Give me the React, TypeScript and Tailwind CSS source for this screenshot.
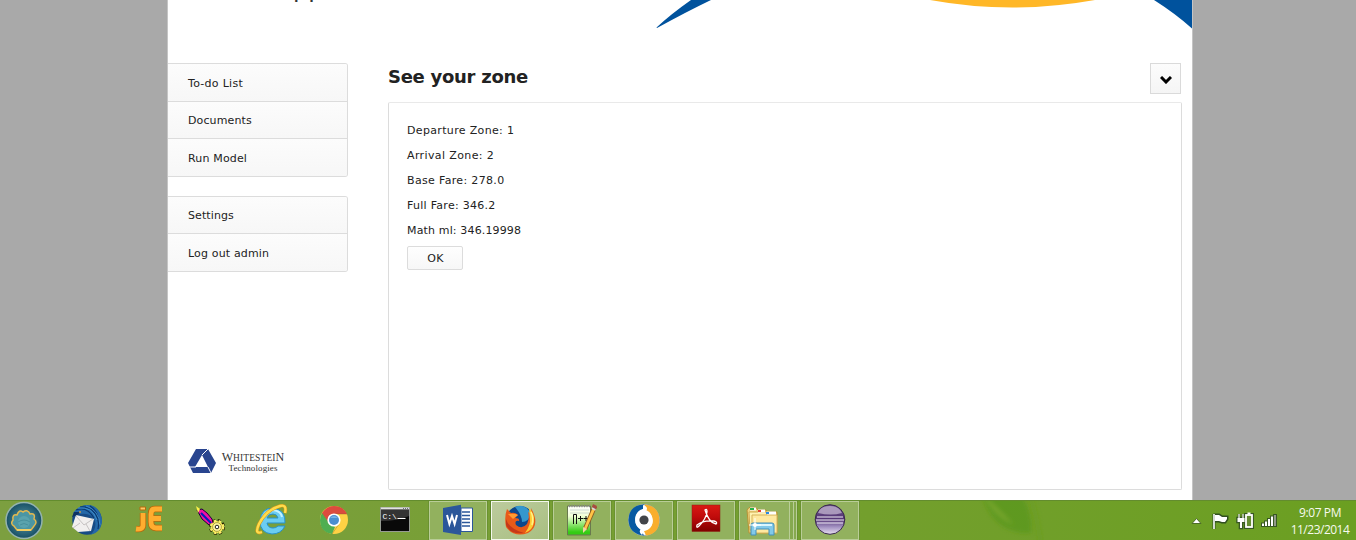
import type { ReactNode } from "react";

function Icon({ children }: { children: ReactNode }) {
  return (
    <svg viewBox="0 0 60 40" className="-mt-[1px] h-[40px] w-[60px] shrink-0">
      {children}
    </svg>
  );
}

function Slot({ children, open, active }: { children: ReactNode; open?: boolean; active?: boolean }) {
  const look = active
    ? "border-[#f4f8ec] bg-gradient-to-br from-[#bccb9e] to-[#a8bf80] outline outline-[#5c852a]"
    : open
      ? "border-[#b9cd97] bg-[#92b15e] outline outline-[#6a9230]"
      : "border-transparent";
  return (
    <div className={`mt-[1px] mr-[3px] ml-[1px] flex h-[39px] w-[58px] shrink-0 items-center justify-center border ${look}`}>
      {children}
    </div>
  );
}

type Label = { text: string; spacing: string; height?: string };

function Menu({ items }: { items: Label[] }) {
  return (
    <nav className="w-[180px] overflow-hidden rounded-r-[3px] border border-l-0 border-[#dcdcdc]">
      {items.map((item, i) => (
        <div
          key={item.text}
          className={`flex items-center bg-gradient-to-b from-[#fcfcfc] to-[#f7f7f7] pl-5 ${i ? "border-t border-[#dcdcdc]" : ""} ${item.height} ${item.spacing}`}
        >
          {item.text}
        </div>
      ))}
    </nav>
  );
}

function Thunderbird() {
  return (
    <Icon>
      <circle cx="31" cy="20" r="14.8" fill="#174b86" />
      <path d="M17 13Q24 4 34 5Q44 7 46 20Q46 32 34 35Q41 29 39 21Q35 12 24 14Z" fill="#2468a9" />
      <path d="M20 10Q31 6 38 18M24 7Q40 5 43 25M34 6Q45 13 42 29" fill="none" stroke="#0b3870" strokeWidth="1.2" />
      <path d="M22 8Q36 6 41 20M30 6Q43 10 44 25" fill="none" stroke="#4495d2" strokeWidth=".8" />
      <path d="M20 15L38 19L35 31L22 32L16 27Z" fill="#f1efee" />
      <path d="M20 16L28 25L37 19M17 28L24 23M34 31L30 24" fill="none" stroke="#bab6b6" strokeWidth=".8" />
      <path d="M16 17L18 12L25 12L21 15Z" fill="#0e3262" />
      <circle cx="24" cy="12" r="1" fill="#c99f4d" />
    </Icon>
  );
}

function JEdit() {
  return (
    <Icon>
      <path d="M25 13V25Q25 30 18 29M44 9H37Q33 9 33 14V22Q33 28 38 28H44M33 18.5H43" fill="none" stroke="#b86a0c" strokeWidth="6.4" />
      <path d="M25 13V25Q25 30 18 29M44 9H37Q33 9 33 14V22Q33 28 38 28H44M33 18.5H43" fill="none" stroke="#ffad2f" strokeWidth="4.8" />
      <path d="M22 7H27.5V10H22Z" fill="#ffc965" stroke="#b86a0c" />
    </Icon>
  );
}

function FeatherGear() {
  return (
    <Icon>
      <path d="M17 10L22 9L27 13L32 19L34 26L29 25L22 19Z" fill="#f010a4" stroke="#16003b" />
      <path d="M16 6L20 9L18 13Z" fill="#fff34a" />
      <path d="M21 13L31 23" stroke="#001dbb" strokeWidth="2" />
      <circle cx="37" cy="27" r="6" fill="#ffef58" stroke="#1d1c00" strokeWidth="4" strokeDasharray="2.7 2" />
      <circle cx="37" cy="27" r="5.8" fill="#ffef58" stroke="#fff06a" strokeWidth="3" strokeDasharray="2.3 2.4" />
      <circle cx="37" cy="27" r="4.4" fill="#fff59a" stroke="#786e20" strokeWidth=".6" />
      <circle cx="37" cy="27" r="1.8" fill="#fff" stroke="#222" />
    </Icon>
  );
}

function Explorer() {
  return (
    <Icon>
      <path fillRule="evenodd" d="M43 23H25Q26 28 31 28Q34 28 36 26H43Q39 34 30 34Q18 33 18 21Q19 8 31 8Q44 10 43 23ZM25 18H36Q35 14 31 14Q26 14 25 18Z" fill="#6bcdf2" stroke="#2791c9" />
      <path d="M21 17Q24 10 31 10Q39 11 40 17" fill="none" stroke="#c5f2fd" strokeWidth="2" />
      <path d="M20 32Q12 35 17 24Q24 10 38 6Q45 4 43 13" fill="none" stroke="#d79b15" strokeWidth="3.5" />
      <path d="M20 32Q12 35 17 24Q24 10 38 6Q45 4 43 13" fill="none" stroke="#ffdc4c" strokeWidth="2.4" />
    </Icon>
  );
}

function Chrome() {
  return (
    <Icon>
      <circle cx="30" cy="20" r="14" fill="#ffd244" />
      <path d="M18 13Q23 6 30 6Q39 6 43 14H30L25 23Z" fill="#dc4b3e" />
      <path d="M18 13L25 23L31 27L28 34Q16 32 16 20Q16 16 18 13Z" fill="#4fae51" />
      <path d="M30 14H43M18 13L25 23M35 24L28 34" stroke="#765d2c" strokeOpacity=".35" />
      <circle cx="30" cy="20" r="6.6" fill="#fff" />
      <circle cx="30" cy="20" r="5" fill="#4b8ed0" />
      <path d="M26 18Q30 14 34 18Z" fill="#75b2e6" />
    </Icon>
  );
}

function Terminal() {
  return (
    <Icon>
      <rect x="14.5" y="7.5" width="29" height="24" fill="#090909" stroke="#969b92" />
      <path d="M15 8.5H43" stroke="#e1e3df" strokeWidth="2" />
      <path d="M37 8.5H42" stroke="#697077" strokeDasharray="1 1" />
      <path d="M15 21Q32 21 43 16V10H15Z" fill="#343434" />
      <text x="16.5" y="18.5" fontSize="8" fontFamily="Liberation Mono" fill="#fff">C:\</text>
      <path d="M31.5 18.5H39.5" stroke="#fff" />
    </Icon>
  );
}

function Word() {
  return (
    <Icon>
      <path d="M33 8H44.5V31.5H33Z" fill="#fff" stroke="#2b579a" />
      <path d="M34 12H42M34 15.5H42M34 19H42M34 22.5H42M34 26H42" stroke="#2b579a" strokeWidth="1.4" />
      <path d="M15 8L33 4.7V35L15 32Z" fill="#2b579a" />
      <path d="M19 15L21.4 24L24 16L26.6 24L29 15" fill="none" stroke="#fff" strokeWidth="2" />
    </Icon>
  );
}

function Firefox() {
  return (
    <Icon>
      <circle cx="30" cy="20" r="14" fill="#0d478c" />
      <path d="M25 7Q34 3 41 13Q39 22 32 22Q32 15 25 7Z" fill="#3597cd" />
      <path d="M17 9L21 13Q25 12 28 15L25 18Q30 18 29 21Q24 20 26 25Q32 30 37 24Q40 18 38 12Q42 15 41 8Q51 26 38 33Q24 38 16 27Q14 17 17 9Z" fill="#e85a18" />
      <path d="M39 8Q45 14 44 22Q43 30 35 33Q41 25 40 18Z" fill="#ffcc32" />
      <path d="M41 12Q44 18 42 25" fill="none" stroke="#fff38a" strokeWidth="1.5" />
      <path d="M16 19Q19 29 34 33Q21 35 16 25Z" fill="#c53819" />
      <path d="M18 14Q25 13 28 15L23 19Z" fill="#ff9b31" />
    </Icon>
  );
}

function Notepad() {
  return (
    <Icon>
      <defs><linearGradient id="note" x2="0" y2="1"><stop stopColor="#fff" /><stop offset=".35" stopColor="#f1ffd5" /><stop offset=".9" stopColor="#34cc14" /></linearGradient></defs>
      <path d="M15.5 6H38.5V35H15.5Z" fill="url(#note)" stroke="#69794f" />
      <path d="M17 6H38" stroke="#888" strokeWidth="2.5" strokeDasharray="1 1.5" />
      <path d="M18 10H37M18 13H37" stroke="#aab8bd" strokeOpacity=".5" />
      <path d="M21.5 24V14.5H24.5V24M26 18.5H31M28.5 16V21M31.5 18.5H36.5M34 16V21" fill="none" stroke="#111" strokeWidth="1" />
      <path d="M43 6L33 29" stroke="#8e5b22" strokeWidth="4.5" />
      <path d="M43 6L33 29" stroke="#ffc446" strokeWidth="2.8" />
      <path d="M41 4L45 6L43.5 10L40 8Z" fill="#a84b42" />
      <path d="M40 8L43.5 10" stroke="#d4d9da" strokeWidth="1.5" />
      <path d="M31 27L35 29L31 33Z" fill="#eed5a1" />
    </Icon>
  );
}

function Orbit() {
  return (
    <Icon>
      <circle cx="30" cy="20" r="15.5" fill="#fff" stroke="#8ba3b7" />
      <path d="M30 4.5Q15 5 14.5 20Q15 34 30 35.5L27 30Q19 25 22 15L29 9Z" fill="#075aa2" />
      <path d="M31 4.5Q45 6 45.5 20Q45 34 32 35.5L30 31Q41 27 38 17Q37 11 29 9Z" fill="#f9ae2d" />
      <path d="M29 5Q35 7 32 11Q41 15 38 25Q36 30 30 31L28 35Q24 32 27 29Q19 25 22 15Q24 10 29 9Z" fill="#fff" />
      <circle cx="30" cy="20" r="4.6" fill="#424448" />
    </Icon>
  );
}

function Acrobat() {
  return (
    <Icon>
      <defs><linearGradient id="acro" x2="0" y2="1"><stop stopColor="#d91a14" /><stop offset=".45" stopColor="#c00b0b" /><stop offset="1" stopColor="#800000" /></linearGradient></defs>
      <rect x="16" y="5" width="28" height="26.5" fill="url(#acro)" stroke="#8d2017" strokeWidth=".5" />
      <path d="M29 10Q31 8 31 12Q30 19 23 26Q20 29 21 25Q27 20 38 21Q42 22 40 24Q33 23 29 10Z" fill="none" stroke="#fff" strokeWidth="1.3" />
    </Icon>
  );
}

function Files() {
  return (
    <svg viewBox="0 0 50 40" className="-mt-[1px] -ml-[3px] h-[40px] w-[50px] shrink-0">
      <path d="M9 10L11 7.5H18L20 10H28L30 12H39V33H11Z" fill="#ead17c" stroke="#b89235" />
      <path d="M11 12H29V30H12Z" fill="#fff2b0" stroke="#d2aa4f" />
      <path d="M14 15H39V33H14Z" fill="#ffe9a0" stroke="#d5b35b" />
      <path d="M12 9H18M20 11H27M29 13H38" stroke="#fff" strokeWidth="3" />
      <path d="M12 9H16" stroke="#24b347" strokeWidth="2" />
      <path d="M20 11H23" stroke="#e34031" strokeWidth="2" />
      <path d="M28 13H31" stroke="#2a89e6" strokeWidth="2" />
      <path d="M13 35V25Q13 23 15 23H34Q36 23 36 25V35H31V29H18V35Z" fill="#82c9e9" stroke="#428fb8" />
      <path d="M15 25H34" stroke="#d9f6ff" strokeWidth="2" />
      <path d="M17 18V30M11 25H23" stroke="#fff" />
      <circle cx="17" cy="25" r="2" fill="#fff" />
    </svg>
  );
}

function Eclipse() {
  return (
    <Icon>
      <defs><linearGradient id="purple" x2="0" y2="1"><stop stopColor="#6b5187" /><stop offset=".5" stopColor="#553675" /><stop offset=".75" stopColor="#a391c2" /><stop offset="1" stopColor="#e9e2f2" /></linearGradient></defs>
      <circle cx="30" cy="19.5" r="14.8" fill="url(#purple)" stroke="#39294c" />
      <path d="M18 13Q20 6 30 6Q39 6 42 13Q31 16 18 13Z" fill="#cabdd5" fillOpacity=".7" />
      <path d="M17 17H43M16 20H44M17 23H43" stroke="#f2edf7" strokeWidth="1.2" />
    </Icon>
  );
}

function Taskbar() {
  return (
    <footer className="relative flex h-[40px] shrink-0 overflow-hidden border-t border-[#638c2e] bg-gradient-to-r from-[#7c9f40] via-[#769f31] to-[#6b9f21]">
      <svg viewBox="0 0 140 40" className="absolute top-0 left-[940px] h-[40px] w-[140px]">
        <defs><filter id="soft" x="-.2" y="-.2" width="1.4" height="1.4"><feGaussianBlur stdDeviation="2" /></filter></defs>
        <path d="M42 -8Q50 27 82 32H91Q93 14 81 -8Z" fill="#579718" fillOpacity=".7" filter="url(#soft)" />
        <path d="M42 -8Q60 8 74 24Q54 17 42 -8Z" fill="#8bb038" fillOpacity=".5" filter="url(#soft)" />
        <path d="M89 -8Q97 14 101 45" fill="none" stroke="#649a1c" strokeWidth="4" strokeOpacity=".4" filter="url(#soft)" />
      </svg>
      <div className="-mt-[2px] mr-[8px] flex w-[48px] shrink-0 items-center">
        <svg viewBox="0 0 48 40" className="h-[40px] w-[48px]">
          <defs><radialGradient id="shell"><stop stopColor="#5e9ca7" /><stop offset="1" stopColor="#174f65" /></radialGradient></defs>
          <circle cx="24" cy="20.5" r="18" fill="url(#shell)" stroke="#94b3ae" strokeWidth="1.5" />
          <path d="M17 30L14 26Q10 24 13 20Q12 14 17 15Q19 9 23 12Q28 9 30 14Q36 13 34 19Q38 22 34 26L31 30Z" fill="#4b96a3" stroke="#e2b84f" strokeWidth="1.5" />
          <circle cx="24" cy="22" r="6" fill="#6ab0b8" fillOpacity=".5" />
          <path d="M20 25Q24 22 28 25M18 22Q24 18 30 22" fill="none" stroke="#347c8c" strokeOpacity=".5" />
          <path d="M17 30H31" stroke="#f1cd62" strokeWidth="2" />
        </svg>
      </div>
      <div className="-mt-[1px] flex">
        <Slot><Thunderbird /></Slot>
        <Slot><JEdit /></Slot>
        <Slot><FeatherGear /></Slot>
        <Slot><Explorer /></Slot>
        <Slot><Chrome /></Slot>
        <Slot><Terminal /></Slot>
        <Slot open><Word /></Slot>
        <Slot open active><Firefox /></Slot>
        <Slot open><Notepad /></Slot>
        <Slot open><Orbit /></Slot>
        <Slot open><Acrobat /></Slot>
        <div className="mt-[1px] mr-[3px] ml-[1px] flex h-[39px] w-[58px] shrink-0 outline outline-[#6a9230]">
          <div className="flex w-[51px] items-center justify-center overflow-hidden border border-[#b9cd97] bg-[#92b15e]"><Files /></div>
          <div className="w-[4px] border-y border-r border-[#b9cd97] bg-[#86a94f]" />
          <div className="w-[3px] border-y border-r border-[#b9cd97] bg-[#86a94f]" />
        </div>
        <Slot open><Eclipse /></Slot>
      </div>
      <div className="relative ml-auto flex font-['Open_Sans',sans-serif] text-[12px] leading-[17px] text-[#f7faef]">
        <svg viewBox="0 0 104 40" className="-mt-[1px] h-[40px] w-[104px]">
          <path d="M6 23.5H15L10.5 18.5Z" fill="#fff" stroke="#4d6d27" />
          <path d="M28 14V29M29 15H33L36 17H41V19L39 22H36L33 21H29Z" fill="#fff" stroke="#315020" strokeWidth="3" />
          <path d="M28 14V29" stroke="#fff" strokeWidth="1.6" />
          <path d="M29 15H33L36 17H41V19L39 22H36L33 21H29Z" fill="#fff" />
          <path d="M53 14V18M57 14V18M51.5 18H58.5V22H56V28H54V22H51.5Z" fill="#fff" stroke="#385824" strokeWidth="2.6" />
          <rect x="60" y="15" width="6" height="12" fill="none" stroke="#385824" strokeWidth="4" />
          <path d="M53 14V18M57 14V18" stroke="#fff" strokeWidth="1.2" />
          <path d="M51.5 18H58.5V22H56V28H54V22H51.5Z" fill="#fff" />
          <rect x="60" y="15" width="6" height="12" fill="#658d32" stroke="#fff" strokeWidth="1.8" />
          <path d="M61.5 13.5H64.5" stroke="#fff" strokeWidth="2" />
          <path d="M75 27V22.5H78V20.5H81V18H84V15.5H87V14H91V27Z" fill="#385824" />
          <path d="M77 23.5V26M80 21.5V26M83 19V26M86 16.5V26" stroke="#fff" strokeWidth="2" />
          <path d="M89 15V26" stroke="#929a88" strokeWidth="2" />
        </svg>
        <div className="mr-[5px] -ml-[1px] flex w-[62px] flex-col items-center pt-[3px] whitespace-nowrap">
          <span className="tracking-[-0.4px]">9:07 PM</span>
          <span className="tracking-[-0.5px]">11/23/2014</span>
        </div>
      </div>
    </footer>
  );
}

const tasks: Label[] = [
  { text: "To-do List", spacing: "tracking-[0.28px] pt-[3px]", height: "h-[37px]" },
  { text: "Documents", spacing: "tracking-[0.12px] pt-[3px]", height: "h-[37px]" },
  { text: "Run Model", spacing: "tracking-[0.16px] pt-[3px]", height: "h-[38px]" },
];

const account: Label[] = [
  { text: "Settings", spacing: "tracking-[0.1px] pt-[3px]", height: "h-[36px]" },
  { text: "Log out admin", spacing: "tracking-[0.16px] pt-[3px]", height: "h-[38px]" },
];

const results: Label[] = [
  { text: "Departure Zone: 1", spacing: "tracking-[0.34px]" },
  { text: "Arrival Zone: 2", spacing: "tracking-[0.38px]" },
  { text: "Base Fare: 278.0", spacing: "tracking-[0.34px]" },
  { text: "Full Fare: 346.2", spacing: "tracking-[0.28px]" },
  { text: "Math ml: 346.19998", spacing: "tracking-[0.15px]" },
];

export default function App() {
  return (
    <div className="flex h-[540px] w-[1356px] flex-col overflow-hidden bg-[#a9a9a9] font-['DejaVu_Sans',sans-serif] text-[11px] text-[#222]">
      <div className="ml-[167px] flex h-[500px] w-[1026px] shrink-0 flex-col border-x border-[#c5c5c5] bg-white">
        <header className="flex h-[63px] shrink-0 items-start overflow-hidden">
          <div className="-mt-[24px] ml-[125px] w-[363px] text-[24px] leading-[26px] text-[#333]">pp</div>
          <svg viewBox="656 0 536 40" className="h-[40px] w-[536px]">
            <path d="M656.5 27.5Q671 14 691 0H711Q686 12 657 28Z" fill="#00529d" />
            <path d="M930 0Q1012 15 1095 0Z" fill="#ffb727" />
            <path d="M1154 0H1192V28.5Q1176 14 1154 0Z" fill="#00529d" />
          </svg>
        </header>
        <div className="flex h-[437px]">
          <aside className="flex w-[180px] shrink-0 flex-col gap-[19px]">
            <Menu items={tasks} />
            <Menu items={account} />
            <div className="mt-auto mb-[26px] flex items-center gap-[5px] pl-5">
              <svg viewBox="0 0 28 26" className="h-[26px] w-[28px]">
                <path d="M8 1H20L28 15L23 25H5L0 15ZM14 7L7 19H20Z" fill="#29458f" fillRule="evenodd" />
                <path d="M1 19H8M20 1L14 7M20 19L23 25" stroke="#fff" />
              </svg>
              <div className="flex w-[64px] flex-col items-center pt-[1px] font-['Liberation_Serif',serif] whitespace-nowrap text-[#333]">
                <div className="text-[9.5px] leading-[12px] tracking-[0.1px]"><span className="text-[12px]">W</span>HITESTEI<span className="text-[12px]">N</span></div>
                <div className="text-[9px] leading-[9px] tracking-[0.1px]">Technologies</div>
              </div>
            </div>
          </aside>
          <main className="ml-10 w-[794px]">
            <div className="flex h-[39px] items-start justify-between">
              <h1 className="mt-[2px] text-[18px] leading-[23px] font-bold tracking-[-0.28px]">See your zone</h1>
              <button className="mr-[1px] flex h-[31px] w-[31px] items-center justify-center border border-[#dadada] bg-gradient-to-b from-[#fcfcfc] to-[#f5f5f5]">
                <svg viewBox="0 0 12 8" className="mt-[2px] h-[8px] w-[12px]"><path d="M1 1L6 6L11 1" fill="none" stroke="#000" strokeWidth="3" /></svg>
              </button>
            </div>
            <section className="h-[388px] rounded-[2px] border border-[#dcdcdc] border-t-[#e9e9e9] pt-[15px] pl-[18px]">
              {results.map((row) => <p key={row.text} className={`h-[25px] leading-[25px] ${row.spacing}`}>{row.text}</p>)}
              <button className="mt-[3px] flex h-[24px] w-[56px] items-center justify-center rounded-[2px] border border-[#dcdcdc] bg-gradient-to-b from-[#fefefe] to-[#f7f7f7] pt-[3px] pl-[1px] tracking-[0.3px]">OK</button>
            </section>
          </main>
        </div>
      </div>
      <Taskbar />
    </div>
  );
}
